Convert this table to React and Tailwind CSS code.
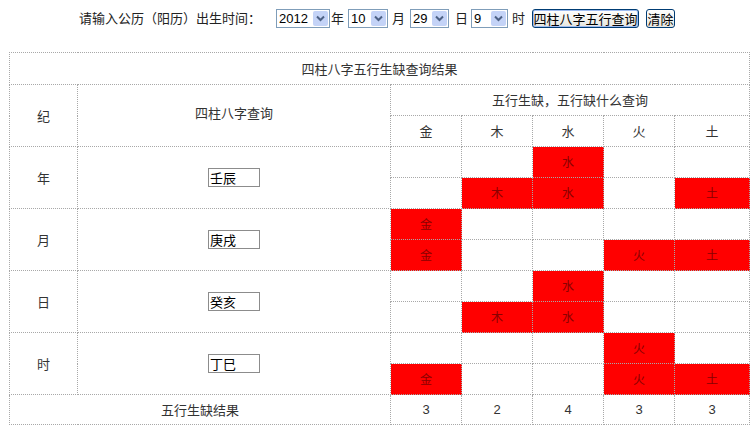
import React from "react";

const FONT = { fontFamily: '"Noto Sans CJK SC", "Noto Sans", sans-serif' };

function Select({ value, width }) {
  return (
    <div
      className="flex h-[19px] items-stretch border border-[#7f9db9] bg-white"
      style={{ width }}
    >
      <div className="flex flex-1 items-center pl-[2px] text-[13px] leading-none text-black" style={{ fontFamily: '"Liberation Sans", Arial, sans-serif' }}>
        {value}
      </div>
      <div className="m-[1px] flex w-[15px] items-center justify-center rounded-[2px] bg-[#c4d3f7]">
        <svg width="9" height="7" viewBox="0 0 9 7">
          <path d="M1 1.5 L4.5 5 L8 1.5" fill="none" stroke="#4d6185" strokeWidth="2" />
        </svg>
      </div>
    </div>
  );
}

const COLS = ["金", "木", "水", "火", "土"];
const PILLARS = [
  { name: "年", gz: "壬辰", a: ["", "", "水", "", ""], b: ["", "木", "水", "", "土"] },
  { name: "月", gz: "庚戌", a: ["金", "", "", "", ""], b: ["金", "", "", "火", "土"] },
  { name: "日", gz: "癸亥", a: ["", "", "水", "", ""], b: ["", "木", "水", "", ""] },
  { name: "时", gz: "丁巳", a: ["", "", "", "火", ""], b: ["金", "", "", "火", "土"] },
];

const cell = "border border-dotted border-[#a8a8a8] text-center align-middle p-0";

function El({ v }) {
  return (
    <td className={`${cell} h-[31px] ${v ? "bg-[#ff0000] text-[#8a0000]" : "bg-white"} text-[12px]`}>
      {v}
    </td>
  );
}

export default function App() {
  return (
    <div className="h-[428px] w-[754px] overflow-hidden bg-white text-[#333]" style={FONT}>
      <div className="flex h-[35px] items-center justify-center pt-[1px] text-[13px] text-[#222]">
        <span className="mr-[15px]">请输入公历（阳历）出生时间：</span>
        <Select value="2012" width={54} />
        <span className="ml-[1px] mr-[4px]">年</span>
        <Select value="10" width={40} />
        <span className="ml-[4px] mr-[5px]">月</span>
        <Select value="29" width={39} />
        <span className="ml-[6px] mr-[3px]">日</span>
        <Select value="9" width={37} />
        <span className="ml-[4px] mr-[7px]">时</span>
        <button className="h-[19px] w-[107px] rounded-[3px] border border-[#003c74] bg-gradient-to-b from-white to-[#e6e6df] text-[13px] leading-none text-black shadow-[inset_0_0_0_1px_#9dbbf1]">
          四柱八字五行查询
        </button>
        <button className="ml-[7px] h-[19px] w-[29px] rounded-[3px] border border-[#003c74] bg-gradient-to-b from-white to-[#e6e6df] text-[13px] leading-none text-black">
          清除
        </button>
      </div>
      <div className="mt-[17px] pl-[9px]">
        <table className="w-[740px] table-fixed border-collapse text-[13px]">
          <colgroup>
            <col className="w-[68px]" />
            <col className="w-[313px]" />
            <col className="w-[71px]" />
            <col className="w-[71px]" />
            <col className="w-[71px]" />
            <col className="w-[71px]" />
            <col className="w-[75px]" />
          </colgroup>
          <tbody>
            <tr>
              <td colSpan={7} className={`${cell} h-[32px]`}>四柱八字五行生缺查询结果</td>
            </tr>
            <tr>
              <td rowSpan={2} className={cell}>纪</td>
              <td rowSpan={2} className={`${cell} pb-[6px]`}>四柱八字查询</td>
              <td colSpan={5} className={`${cell} h-[31px]`}>五行生缺，五行缺什么查询</td>
            </tr>
            <tr>
              {COLS.map((c) => (
                <td key={c} className={`${cell} h-[31px]`}>{c}</td>
              ))}
            </tr>
            {PILLARS.map((p) => (
              <React.Fragment key={p.name}>
                <tr>
                  <td rowSpan={2} className={cell}>{p.name}</td>
                  <td rowSpan={2} className={cell}>
                    <div className="flex justify-center">
                      <div className="flex h-[19px] w-[52px] items-center border border-[#8c8c8c] bg-white pl-[1px] text-[13px] leading-none text-black">
                        {p.gz}
                      </div>
                    </div>
                  </td>
                  {p.a.map((v, i) => (
                    <El key={i} v={v} />
                  ))}
                </tr>
                <tr>
                  {p.b.map((v, i) => (
                    <El key={i} v={v} />
                  ))}
                </tr>
              </React.Fragment>
            ))}
            <tr>
              <td colSpan={2} className={`${cell} h-[30px]`}>五行生缺结果</td>
              {["3", "2", "4", "3", "3"].map((n, i) => (
                <td key={i} className={`${cell} h-[30px]`} style={{ fontFamily: '"Liberation Sans", Arial, sans-serif' }}>{n}</td>
              ))}
            </tr>
          </tbody>
        </table>
      </div>
    </div>
  );
}
